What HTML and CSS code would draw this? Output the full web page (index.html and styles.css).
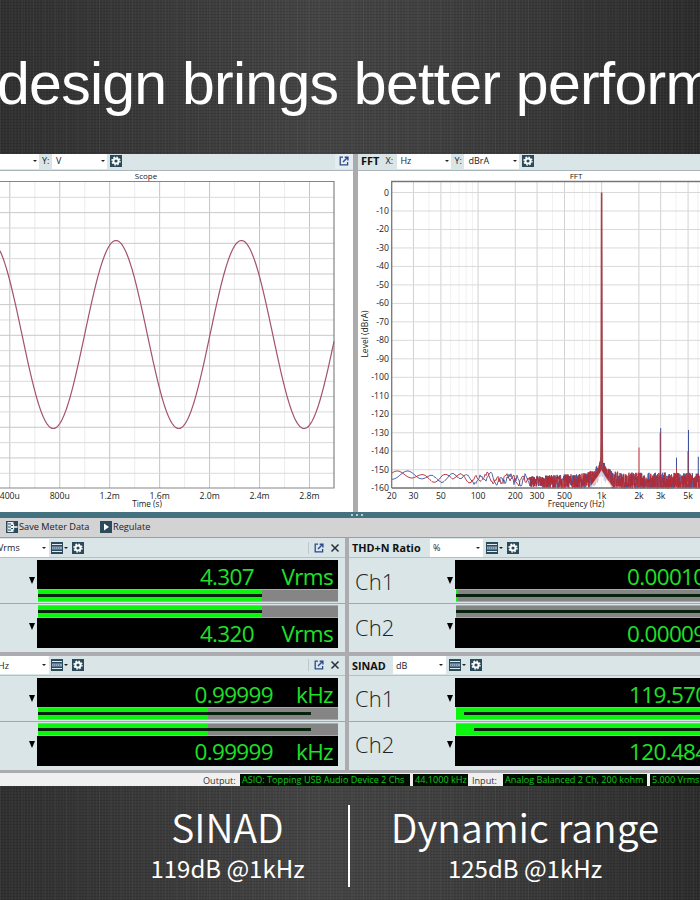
FILE: index.html
```
<!DOCTYPE html>
<html lang="en">
<head>
  <meta charset="UTF-8">
  <meta name="viewport" content="width=device-width, initial-scale=1.0">
  <title>Audio Performance</title>
  <link rel="stylesheet" href="styles.css">
</head>
<body>
  <svg class="defs">
    <symbol id="gear" viewBox="0 0 12 12">
      <rect width="12" height="12" fill="#2b4b5a"/>
      <circle cx="6" cy="6" r="2.6" fill="none" stroke="#fff" stroke-width="2"/>
      <circle cx="6" cy="6" r="4" fill="none" stroke="#fff" stroke-width="1.3" stroke-dasharray="1.6 1.54"/>
    </symbol>
    <symbol id="meter" viewBox="0 0 12 12">
      <rect width="12" height="12" fill="#2b4b5a"/>
      <path d="M1 2.5h10M1 9.5h10" stroke="#dfe8ea"/>
      <path d="M1 6h10" stroke="#8fa9c4" stroke-width="3"/>
      <path d="M2 6h8" stroke="#47627f" stroke-dasharray="1 1"/>
    </symbol>
    <symbol id="popout" viewBox="0 0 10 10">
      <path d="M4 1.2H1.2v7.6h7.4V6" fill="none" stroke="#2c4a8c" stroke-width="1.3"/>
      <path d="M4 6L8 2M5.7 1.2h3.2v3.2" fill="none" stroke="#2c4a8c" stroke-width="1.4"/>
    </symbol>
    <symbol id="close" viewBox="0 0 10 10">
      <path d="M1.5 1.5l7 7M8.5 1.5l-7 7" stroke="#263238" stroke-width="1.5"/>
    </symbol>
  </svg>

  <header>
    <h1>design brings better performance</h1>
  </header>

  <div class="app">
    <div class="charts">
      <div class="panel scope">
        <div class="bar">
          <span class="select scope-x"><i></i></span>
          <span class="axis">Y:</span>
          <span class="select scope-y">V<i></i></span>
          <svg class="icon"><use href="#gear"/></svg>
          <span class="corner"><svg class="small-icon"><use href="#popout"/></svg></span>
        </div>
        <svg id="scope" viewBox="0 171 353 341"></svg>
      </div>
      <div class="panel fft">
        <div class="bar">
          <b>FFT</b>
          <span class="axis fft-x-label">X:</span>
          <span class="select fft-x">Hz<i></i></span>
          <span class="axis">Y:</span>
          <span class="select fft-y">dBrA<i></i></span>
          <svg class="icon"><use href="#gear"/></svg>
        </div>
        <svg id="fft" viewBox="358 171 342 341"></svg>
      </div>
    </div>

    <div class="splitter"><i></i><i></i><i></i></div>

    <div class="toolbar">
      <svg class="tool-icon" viewBox="0 0 12 12">
        <rect width="12" height="12" fill="#2b4b5a"/>
        <path d="M1.5 1h6v10h-6z" fill="#e8eef0"/>
        <path d="M2 3h3M2 6h3M2 9h3" stroke="#2b4b5a"/>
        <path d="M11.5 6H6M8 3.5L5.5 6L8 8.5" fill="none" stroke="#fff" stroke-width="1.3"/>
        <path d="M5 4.5h2M5 7.5h2" stroke="#2b4b5a"/>
      </svg>
      <span class="save">Save Meter Data</span>
      <svg class="tool-icon" viewBox="0 0 12 12">
        <rect width="12" height="12" fill="#2b4b5a"/>
        <path d="M4 2.5l5 3.5l-5 3.5z" fill="#fff"/>
      </svg>
      <span>Regulate</span>
    </div>

    <div class="meters">
      <div class="meter left">
        <div class="bar">
          <span class="select unit-select">Vrms<i></i></span>
          <svg class="icon"><use href="#meter"/></svg><i class="caret"></i>
          <svg class="icon"><use href="#gear"/></svg>
          <span class="tools">
            <svg class="small-icon"><use href="#popout"/></svg>
            <svg class="small-icon"><use href="#close"/></svg>
          </span>
        </div>
        <div class="channel">
          <div class="label"><i class="drop"></i></div>
          <div class="readout">
            <div class="display"><span>4.307</span><span class="unit vrms">Vrms</span></div>
            <div class="level"><div class="fill" style="width: 74.5%"></div><div class="range" style="left: 0; width: 74.5%"></div></div>
          </div>
        </div>
        <div class="channel second">
          <div class="label"><i class="drop"></i></div>
          <div class="readout">
            <div class="level"><div class="fill" style="width: 74.5%"></div><div class="range" style="left: 0; width: 74.5%"></div></div>
            <div class="display"><span>4.320</span><span class="unit vrms">Vrms</span></div>
          </div>
        </div>
      </div>

      <div class="meter right">
        <div class="bar">
          <b class="thd-title">THD+N Ratio</b>
          <span class="select thd-select">%<i></i></span>
          <svg class="icon"><use href="#meter"/></svg><i class="caret"></i>
          <svg class="icon"><use href="#gear"/></svg>
        </div>
        <div class="channel">
          <div class="label"><span>Ch1</span><i class="drop"></i></div>
          <div class="readout">
            <div class="display thd"><span>0.00010</span></div>
            <div class="level"><div class="fill" style="width: 0.5%"></div><div class="range" style="left: 0; width: 100%"></div></div>
          </div>
        </div>
        <div class="channel second">
          <div class="label"><span>Ch2</span><i class="drop"></i></div>
          <div class="readout">
            <div class="level"><div class="range" style="left: 0; width: 100%"></div></div>
            <div class="display thd"><span>0.00009</span></div>
          </div>
        </div>
      </div>

      <div class="meter left">
        <div class="bar">
          <span class="select unit-select">Hz<i></i></span>
          <svg class="icon"><use href="#meter"/></svg><i class="caret"></i>
          <svg class="icon"><use href="#gear"/></svg>
          <span class="tools">
            <svg class="small-icon"><use href="#popout"/></svg>
            <svg class="small-icon"><use href="#close"/></svg>
          </span>
        </div>
        <div class="channel">
          <div class="label"><i class="drop"></i></div>
          <div class="readout">
            <div class="display"><span>0.99999</span><span class="unit khz">kHz</span></div>
            <div class="level"><div class="fill" style="width: 56.7%"></div><div class="range" style="left: 0; width: 91%"></div></div>
          </div>
        </div>
        <div class="channel second">
          <div class="label"><i class="drop"></i></div>
          <div class="readout">
            <div class="level"><div class="fill" style="width: 56.7%"></div><div class="range" style="left: 0; width: 91%"></div></div>
            <div class="display"><span>0.99999</span><span class="unit khz">kHz</span></div>
          </div>
        </div>
      </div>

      <div class="meter right">
        <div class="bar">
          <b class="sinad-title">SINAD</b>
          <span class="select sinad-select">dB<i></i></span>
          <svg class="icon"><use href="#meter"/></svg><i class="caret"></i>
          <svg class="icon"><use href="#gear"/></svg>
        </div>
        <div class="channel">
          <div class="label"><span>Ch1</span><i class="drop"></i></div>
          <div class="readout">
            <div class="display sinad"><span>119.570</span></div>
            <div class="level"><div class="fill" style="width: 100%"></div><div class="range" style="left: 2.4%; width: 97.6%"></div></div>
          </div>
        </div>
        <div class="channel second">
          <div class="label"><span>Ch2</span><i class="drop"></i></div>
          <div class="readout">
            <div class="level"><div class="fill" style="width: 100%"></div><div class="range" style="left: 5.4%; width: 94.6%"></div></div>
            <div class="display sinad"><span>120.484</span></div>
          </div>
        </div>
      </div>
    </div>

    <div class="status">
      <span class="name">Output:</span>
      <span class="value device">ASIO: Topping USB Audio Device 2 Chs</span>
      <span class="value rate">44.1000 kHz</span>
      <span class="name input">Input:</span>
      <span class="value analog">Analog Balanced 2 Ch, 200 kohm</span>
      <span class="value volts">5.000 Vrms</span>
    </div>
  </div>

  <footer>
    <div class="spec spec-sinad">
      <h2>SINAD</h2>
      <p>119dB @1kHz</p>
    </div>
    <div class="rule"></div>
    <div class="spec spec-range">
      <h2>Dynamic range</h2>
      <p>125dB @1kHz</p>
    </div>
  </footer>

  <script src="charts.js"></script>
</body>
</html>
```
FILE: styles.css
```
* {
  box-sizing: border-box;
}
body {
  margin: 0;
  width: 700px;
  height: 900px;
  overflow: hidden;
  display: flex;
  flex-direction: column;
  font-family: "Open Sans", "Noto Sans", sans-serif;
  font-size: 9px;
  color: #222;
  background:
    repeating-linear-gradient(90deg, rgba(255, 255, 255, 0.03) 0 1px, transparent 1px 3px),
    repeating-linear-gradient(0deg, rgba(0, 0, 0, 0.11) 0 1px, transparent 1px 3px),
    repeating-linear-gradient(90deg, rgba(255, 255, 255, 0.03) 0 1px, transparent 1px 11px),
    linear-gradient(90deg, #303030 0, #444 45%, #414141 60%, #2c2c2c 100%);
}
.defs {
  display: none;
}
header {
  height: 154px;
  flex: none;
  padding-top: 50px;
  overflow: hidden;
}
h1 {
  margin: 0 0 0 -3px;
  font: 59px/68px "Liberation Sans", Arial, sans-serif;
  letter-spacing: -0.75px;
  white-space: nowrap;
  color: #fff;
}
.app {
  height: 632px;
  flex: none;
  background: #d9e4e6;
  overflow: hidden;
}
.bar {
  display: flex;
  align-items: center;
  background: #d9e5e7;
  white-space: nowrap;
}
.bar b {
  font-size: 11px;
  color: #111;
}
.charts {
  display: flex;
  height: 358px;
}
.panel {
  background: #fff;
}
.panel .bar {
  height: 17px;
  border-bottom: 1px solid #a9b5b8;
  padding-bottom: 3px;
}
.scope {
  width: 353px;
}
.fft {
  width: 347px;
  border-left: 5px solid #ababab;
}
.panel > svg {
  display: block;
  height: 341px;
}
.scope > svg {
  width: 353px;
}
.fft > svg {
  width: 342px;
}
.axis {
  width: 13px;
  padding-left: 3px;
}
.select {
  display: flex;
  align-items: center;
  justify-content: space-between;
  height: 16px;
  background: #fff;
  padding: 0 3px;
}
.select i, .caret {
  border: 2.5px solid transparent;
  border-top: 2.5px solid #222;
  border-bottom: 0;
}
.scope-x {
  width: 39px;
  padding-right: 2px;
  justify-content: flex-end;
}
.scope-y {
  width: 55px;
  margin-right: 3px;
  padding-right: 2px;
  padding-left: 4px;
}
.icon {
  width: 12px;
  height: 12px;
}
.small-icon {
  width: 10px;
  height: 10px;
}
.corner {
  margin-left: auto;
  width: 18px;
  padding-left: 4px;
  height: 16px;
  background: #e6edf0;
  display: flex;
  align-items: center;
}
.fft b {
  padding-left: 3px;
}
.fft-x-label {
  width: 18px;
  padding-left: 6px;
}
.fft-x {
  width: 54px;
  padding-right: 2px;
}
.fft-y {
  width: 55px;
  margin-right: 3px;
  padding-left: 4px;
  padding-right: 2px;
}
.splitter {
  height: 6px;
  background: #44717f;
  display: flex;
  gap: 3px;
  align-items: center;
  padding-left: 351px;
}
.splitter i {
  width: 2px;
  height: 2px;
  background: #b7cdd4;
}
.toolbar {
  height: 20px;
  background: #d3d3d3;
  border-bottom: 1px solid #9aa0a2;
  display: flex;
  align-items: center;
  padding: 0 0 2px 6px;
  font-size: 9.2px;
}
.tool-icon {
  width: 12px;
  height: 12px;
  margin-right: 1px;
}
.save {
  width: 81px;
  white-space: nowrap;
}
.meters {
  display: grid;
  grid-template-columns: 345px 435px;
  column-gap: 4px;
  row-gap: 3px;
  height: 235px;
  background: #acacb0;
  border-bottom: 3px solid #acacb0;
}
.meter {
  background: #d9e5e7;
  height: 114px;
}
.meter .bar {
  height: 20px;
  border-bottom: 1px solid #b6c0c3;
}
.meter .select {
  height: 18px;
}
.caret {
  border-width: 2px;
  border-top-width: 2px;
  margin: 0 4px 0 1px;
}
.unit-select {
  width: 49px;
  margin-right: 2px;
  padding-left: 0;
  text-indent: -2px;
}
.tools {
  display: flex;
  gap: 6px;
  margin-left: auto;
  padding: 1px 5px 1px 5px;
  border-left: 1px solid #bcc8cb;
}
.right .bar b {
  padding-left: 3px;
}
.right .bar .thd-title {
  width: 81px;
  font-size: 10.8px;
}
.thd-select {
  width: 53px;
  margin-right: 3px;
}
.right .bar .sinad-title {
  width: 44px;
  font-size: 10.8px;
}
.sinad-select {
  width: 53px;
  margin-right: 3px;
}
.channel {
  display: flex;
  height: 46px;
  padding-top: 2px;
  border-bottom: 1px solid #9fa8aa;
}
.channel.second {
  padding-top: 1px;
  border-bottom: 0;
}
.label {
  width: 37px;
  display: flex;
  justify-content: space-between;
  align-items: center;
  padding: 0 2px 2px 0;
  font-size: 22px;
  font-weight: 300;
  color: #1d2426;
}
.left .label {
  justify-content: flex-end;
}
.right .label {
  width: 106px;
  padding-left: 6px;
}
.drop {
  border: 3.5px solid transparent;
  border-top: 7px solid #000;
  border-bottom: 0;
}
.readout {
  width: 301px;
}
.right .readout {
  width: 329px;
}
.display {
  height: 29px;
  background: #000;
  color: #1fe028;
  font-size: 22.5px;
  letter-spacing: -0.65px;
  line-height: 33px;
  display: flex;
  justify-content: flex-end;
  padding-right: 5px;
  white-space: nowrap;
  overflow: hidden;
}
.second .display {
  height: 30px;
  line-height: 31px;
}
.vrms {
  width: 79px;
  text-align: right;
}
.khz {
  width: 60px;
  text-align: right;
}
.display.thd {
  justify-content: flex-start;
  padding-left: 172px;
}
.display.sinad {
  justify-content: flex-start;
  padding-left: 174px;
}
.level {
  position: relative;
  height: 13px;
  margin-left: 1px;
  background: #858585;
  border-top: 1px solid #aaa;
  border-bottom: 1px solid #aaa;
}
.fill {
  height: 11px;
  background: #0bf50f;
}
.range {
  position: absolute;
  top: 4px;
  height: 3px;
  background: #06220a;
}
.status {
  height: 13px;
  background: #f0f0f0;
  display: flex;
  align-items: center;
  padding: 1px 0 0 203px;
  white-space: nowrap;
  font-size: 9.1px;
  color: #333;
}
.status span {
  flex: none;
}
.name {
  width: 37px;
}
.input {
  width: 35px;
  padding-left: 4px;
}
.value {
  height: 12px;
  line-height: 11px;
  padding-left: 2px;
  margin-right: 3px;
  background: #020d02;
  color: #12c41b;
  overflow: hidden;
}
.device {
  width: 170px;
}
.rate {
  width: 55px;
  margin-right: 0;
}
.analog {
  width: 144px;
}
.volts {
  width: 60px;
}
footer {
  flex: 1;
  display: flex;
  font-family: "Noto Sans CJK SC", sans-serif;
  font-weight: 350;
  color: #fff;
  text-align: center;
  padding-top: 19px;
}
.spec {
  white-space: nowrap;
}
.spec-sinad {
  width: 241px;
  margin-left: 107px;
}
.rule {
  width: 2px;
  height: 82px;
  background: #fff;
}
.spec-range {
  width: 350px;
}
h2 {
  margin: -3px 0 0;
  font-size: 39px;
  font-weight: 350;
  line-height: 48px;
}
p {
  margin: 0;
  font-size: 24px;
  font-weight: 400;
  line-height: 35px;
}
```
FILE: charts.js
```
const NS = 'http://www.w3.org/2000/svg';

function add(parent, tag, attrs, text) {
  const el = document.createElementNS(NS, tag);
  for (const key in attrs) el.setAttribute(key, attrs[key]);
  if (text) el.textContent = text;
  parent.appendChild(el);
  return el;
}

function line(svg, x1, y1, x2, y2, color, width = 1) {
  add(svg, 'line', { x1, y1, x2, y2, stroke: color, 'stroke-width': width });
}

function label(svg, x, y, text, anchor = 'middle', size = 8.7) {
  return add(svg, 'text', { x, y, 'text-anchor': anchor, 'font-size': size, fill: '#222' }, text);
}

let seed = 7;
function random() {
  seed = (seed * 16807) % 2147483647;
  return seed / 2147483647;
}

// Scope
const scope = document.getElementById('scope');
const times = ['400u', '800u', '1.2m', '1.6m', '2.0m', '2.4m', '2.8m'];
for (let i = 0; i < 7; i++) {
  const x = 9.8 + i * 49.95;
  if (i < 6) line(scope, x + 25, 182, x + 25, 488, '#ececec');
  line(scope, x, 182, x, 488, '#c4c4c4');
  label(scope, x, 498.5, times[i]);
}
for (let i = 1; i < 20; i++) {
  const y = 182 + i * 15.33;
  line(scope, 0, y, 334, y, i % 2 ? '#dadada' : '#c8c8c8');
}
add(scope, 'path', { d: 'M0 181.5H334V488H0', fill: 'none', stroke: '#858585', 'stroke-width': 1.2 });
let wave = '';
for (let x = 0; x <= 334; x++) {
  const y = 334.5 - 94 * Math.cos((x - 116) / 125.4 * 2 * Math.PI);
  wave += (x ? 'L' : 'M') + x + ' ' + y.toFixed(2);
}
add(scope, 'path', { d: wave, fill: 'none', stroke: '#a3526a', 'stroke-width': 1.2 });
label(scope, 146, 178.5, 'Scope', 'middle', 8);
label(scope, 147, 507, 'Time (s)', 'middle', 8.2);

// FFT
const fft = document.getElementById('fft');
const fx = f => 391.7 + Math.log10(f / 20) * 123.6;
const fy = db => 192.5 - db * 1.848;
for (const decade of [10, 100, 1000]) {
  for (let n = 1; n < 10; n++) {
    const f = n * decade;
    if (f <= 20 || f > 6000) continue;
    const major = [1, 2, 3, 5].includes(n);
    line(fft, fx(f), 182, fx(f), 488, major ? '#d2d2d2' : '#f1f1f1');
  }
}
for (let db = 0; db >= -160; db -= 10) {
  line(fft, 392, fy(db), 700, fy(db), '#d9d9d9');
  label(fft, 389, fy(db) + 3, String(db), 'end');
}
const ticks = { 20: '20', 30: '30', 50: '50', 100: '100', 200: '200', 300: '300', 500: '500', 1000: '1k', 2000: '2k', 3000: '3k', 5000: '5k' };
for (const f in ticks) label(fft, fx(f), 498.5, ticks[f]);

function trace(color, shift) {
  let d = '';
  let phase = shift;
  for (let x = 392; x < 530; x += 1) {
    const t = (x - 392) / 138;
    phase += 0.22 + t * t * 0.75;
    const swing = Math.sin(phase) * 2 + Math.sin(phase * 0.43 + shift) * 1.4;
    const db = -153.3 - t * 2.2 + swing * 0.85 + (random() - 0.5) * t * t * 4;
    d += (d ? 'L' : 'M') + x + ' ' + fy(db).toFixed(1);
  }
  for (let x = 530; x < 701; x += 0.25) {
    const skirt = 9 * Math.exp(-Math.abs(x - 601.5) / 5.5);
    const spread = x < 601 ? 6 + (x - 530) / 18 : 10;
    const db = Math.max(-160, -156.5 + skirt + (random() - 0.5) * spread);
    d += 'L' + x + ' ' + fy(db).toFixed(1);
  }
  add(fft, 'path', { d, fill: 'none', stroke: color, 'stroke-width': 0.9 });
}
trace('#4058a0', 4.2);
line(fft, 660.7, fy(-127.5), 660.7, 487, '#3d529b');
line(fft, 676.5, fy(-143.5), 676.5, 487, '#3d529b');
line(fft, 688.5, fy(-128.5), 688.5, 487, '#3d529b');
line(fft, 698.3, fy(-143), 698.3, 487, '#3d529b');
trace('#b22a35', 0.3);
line(fft, 639, fy(-138), 639, 487, '#c23b45');
line(fft, 660.2, fy(-130), 660.2, 487, '#a83240');
line(fft, 676.5, fy(-149), 676.5, 487, '#b53340');
line(fft, 688, fy(-140), 688, 487, '#b53340');
// the skirt is open below the carrier
add(fft, 'path', { d: 'M601.5 470L605 476L613 487H590L598 476Z', fill: '#fff', opacity: 0.7 });
add(fft, 'path', { d: 'M600.8 192.5H602.4L603 440L603.3 470H600L600.3 440Z', fill: '#a3404a' });
add(fft, 'path', { d: 'M391.7 488V181.5H700M391.7 488H700', fill: 'none', stroke: '#777', 'stroke-width': 1.3 });
label(fft, 576, 178.5, 'FFT', 'middle', 8);
label(fft, 576, 507, 'Frequency (Hz)', 'middle', 8.2);
label(fft, 0, 0, 'Level (dBrA)', 'middle', 8.5).setAttribute('transform', 'translate(368 334) rotate(-90)');
```
